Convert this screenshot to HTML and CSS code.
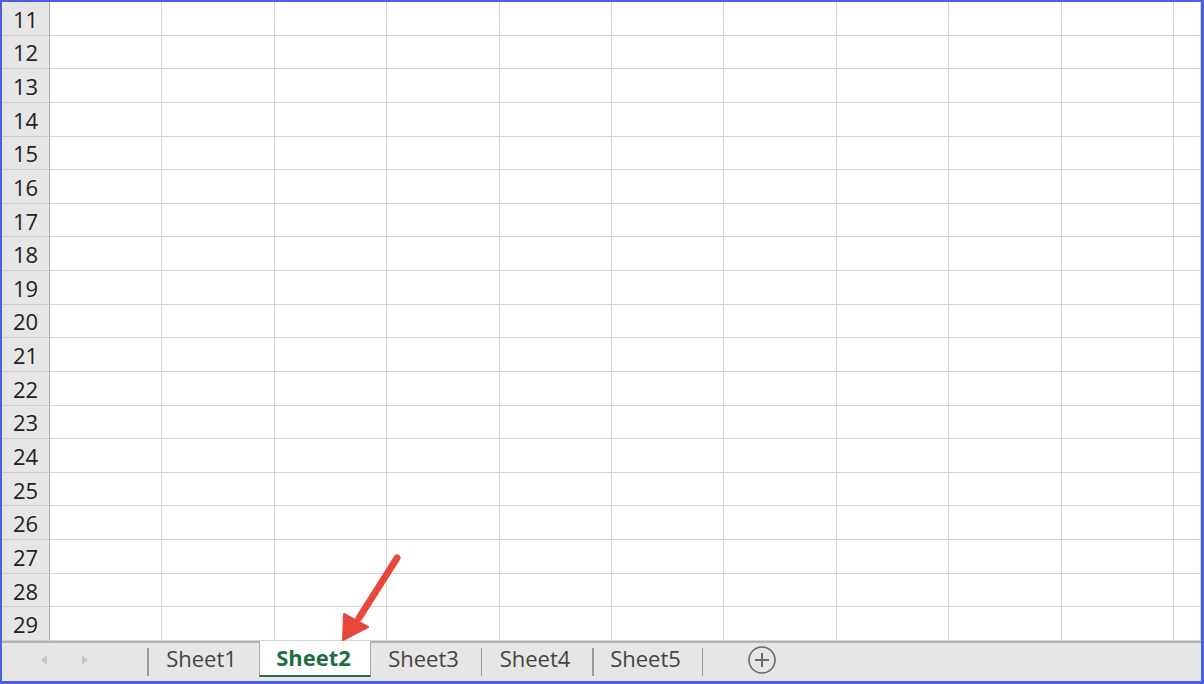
FILE: index.html
```html
<!DOCTYPE html>
<html>
<head>
<meta charset="utf-8">
<link rel="stylesheet" href="styles.css">
</head>
<body>
<div class="frame">
  <div class="sheet">
    <div class="row"><div class="rh">11</div><div class="c"></div><div class="c"></div><div class="c"></div><div class="c"></div><div class="c"></div><div class="c"></div><div class="c"></div><div class="c"></div><div class="c"></div><div class="c"></div><div class="c"></div></div>
    <div class="row"><div class="rh">12</div><div class="c"></div><div class="c"></div><div class="c"></div><div class="c"></div><div class="c"></div><div class="c"></div><div class="c"></div><div class="c"></div><div class="c"></div><div class="c"></div><div class="c"></div></div>
    <div class="row"><div class="rh">13</div><div class="c"></div><div class="c"></div><div class="c"></div><div class="c"></div><div class="c"></div><div class="c"></div><div class="c"></div><div class="c"></div><div class="c"></div><div class="c"></div><div class="c"></div></div>
    <div class="row"><div class="rh">14</div><div class="c"></div><div class="c"></div><div class="c"></div><div class="c"></div><div class="c"></div><div class="c"></div><div class="c"></div><div class="c"></div><div class="c"></div><div class="c"></div><div class="c"></div></div>
    <div class="row"><div class="rh">15</div><div class="c"></div><div class="c"></div><div class="c"></div><div class="c"></div><div class="c"></div><div class="c"></div><div class="c"></div><div class="c"></div><div class="c"></div><div class="c"></div><div class="c"></div></div>
    <div class="row"><div class="rh">16</div><div class="c"></div><div class="c"></div><div class="c"></div><div class="c"></div><div class="c"></div><div class="c"></div><div class="c"></div><div class="c"></div><div class="c"></div><div class="c"></div><div class="c"></div></div>
    <div class="row"><div class="rh">17</div><div class="c"></div><div class="c"></div><div class="c"></div><div class="c"></div><div class="c"></div><div class="c"></div><div class="c"></div><div class="c"></div><div class="c"></div><div class="c"></div><div class="c"></div></div>
    <div class="row"><div class="rh">18</div><div class="c"></div><div class="c"></div><div class="c"></div><div class="c"></div><div class="c"></div><div class="c"></div><div class="c"></div><div class="c"></div><div class="c"></div><div class="c"></div><div class="c"></div></div>
    <div class="row"><div class="rh">19</div><div class="c"></div><div class="c"></div><div class="c"></div><div class="c"></div><div class="c"></div><div class="c"></div><div class="c"></div><div class="c"></div><div class="c"></div><div class="c"></div><div class="c"></div></div>
    <div class="row"><div class="rh">20</div><div class="c"></div><div class="c"></div><div class="c"></div><div class="c"></div><div class="c"></div><div class="c"></div><div class="c"></div><div class="c"></div><div class="c"></div><div class="c"></div><div class="c"></div></div>
    <div class="row"><div class="rh">21</div><div class="c"></div><div class="c"></div><div class="c"></div><div class="c"></div><div class="c"></div><div class="c"></div><div class="c"></div><div class="c"></div><div class="c"></div><div class="c"></div><div class="c"></div></div>
    <div class="row"><div class="rh">22</div><div class="c"></div><div class="c"></div><div class="c"></div><div class="c"></div><div class="c"></div><div class="c"></div><div class="c"></div><div class="c"></div><div class="c"></div><div class="c"></div><div class="c"></div></div>
    <div class="row"><div class="rh">23</div><div class="c"></div><div class="c"></div><div class="c"></div><div class="c"></div><div class="c"></div><div class="c"></div><div class="c"></div><div class="c"></div><div class="c"></div><div class="c"></div><div class="c"></div></div>
    <div class="row"><div class="rh">24</div><div class="c"></div><div class="c"></div><div class="c"></div><div class="c"></div><div class="c"></div><div class="c"></div><div class="c"></div><div class="c"></div><div class="c"></div><div class="c"></div><div class="c"></div></div>
    <div class="row"><div class="rh">25</div><div class="c"></div><div class="c"></div><div class="c"></div><div class="c"></div><div class="c"></div><div class="c"></div><div class="c"></div><div class="c"></div><div class="c"></div><div class="c"></div><div class="c"></div></div>
    <div class="row"><div class="rh">26</div><div class="c"></div><div class="c"></div><div class="c"></div><div class="c"></div><div class="c"></div><div class="c"></div><div class="c"></div><div class="c"></div><div class="c"></div><div class="c"></div><div class="c"></div></div>
    <div class="row"><div class="rh">27</div><div class="c"></div><div class="c"></div><div class="c"></div><div class="c"></div><div class="c"></div><div class="c"></div><div class="c"></div><div class="c"></div><div class="c"></div><div class="c"></div><div class="c"></div></div>
    <div class="row"><div class="rh">28</div><div class="c"></div><div class="c"></div><div class="c"></div><div class="c"></div><div class="c"></div><div class="c"></div><div class="c"></div><div class="c"></div><div class="c"></div><div class="c"></div><div class="c"></div></div>
    <div class="row"><div class="rh">29</div><div class="c"></div><div class="c"></div><div class="c"></div><div class="c"></div><div class="c"></div><div class="c"></div><div class="c"></div><div class="c"></div><div class="c"></div><div class="c"></div><div class="c"></div></div>
  </div>
  <div class="tabbar">
    <div class="nav">
      <svg class="navicon" width="8" height="12" viewBox="0 0 8 12"><path d="M7 1 L1 6 L7 11 Z" fill="#c6c6c6"/></svg>
      <svg class="navicon" width="8" height="12" viewBox="0 0 8 12"><path d="M1 1 L7 6 L1 11 Z" fill="#c6c6c6"/></svg>
    </div>
    <span class="sep"></span>
    <div class="tab">Sheet1</div>
    <div class="tab active">Sheet2</div>
    <div class="tab">Sheet3</div>
    <span class="sep"></span>
    <div class="tab">Sheet4</div>
    <span class="sep"></span>
    <div class="tab narrow">Sheet5</div>
    <span class="sep"></span>
    <div class="add">
      <svg width="30" height="30" viewBox="0 0 30 30"><circle cx="15" cy="15" r="13" fill="none" stroke="#6a6a6a" stroke-width="1.6"/><path d="M15 8 V22 M8 15 H22" stroke="#6a6a6a" stroke-width="2"/></svg>
    </div>
  </div>
  <svg class="callout" width="80" height="100" viewBox="0 0 80 100">
    <line x1="67" y1="10" x2="29" y2="70" stroke="#e8473d" stroke-width="7" stroke-linecap="round"/>
    <path d="M13 92 L14 66 L38 79 Z" fill="#e8473d" stroke="#e8473d" stroke-width="2" stroke-linejoin="round"/>
  </svg>
</div>
</body>
</html>
```
FILE: styles.css
```css
html, body {
  margin: 0;
  padding: 0;
}
body {
  width: 1204px;
  height: 684px;
  overflow: hidden;
  font-family: "Open Sans", "Noto Sans", sans-serif;
}
.frame {
  position: relative;
  box-sizing: border-box;
  width: 1204px;
  height: 684px;
  border-style: solid;
  border-color: #4a5ee6;
  border-width: 2px 3px 3px 2px;
  display: flex;
  flex-direction: column;
  background: #fff;
}
.sheet {
  height: 639px;
  flex-shrink: 0;
  display: grid;
  grid-template-rows: repeat(19, 1fr);
  overflow: hidden;
}
.row {
  display: grid;
  grid-template-columns: 48px repeat(10, 112.4px) 1fr;
}
.rh {
  background: #e6e6e6;
  border-right: 1px solid #ababab;
  border-bottom: 1px solid #cccccc;
  color: #222;
  font-size: 22px;
  display: flex;
  align-items: center;
  justify-content: center;
  line-height: 1;
  padding-top: 1px;
}
.c {
  border-right: 1px solid #d4d4d4;
  border-bottom: 1px solid #d4d4d4;
}
.tabbar {
  flex: 1;
  min-height: 0;
  display: flex;
  align-items: stretch;
  background: #e6e6e6;
  border-top: 2px solid #b3b3b3;
}
.nav {
  width: 145px;
  display: flex;
  align-items: center;
  justify-content: center;
  gap: 33px;
  padding-right: 20px;
  box-sizing: border-box;
  padding-bottom: 5px;
}
.sep {
  width: 1.5px;
  background: #9a9a9a;
  margin: 5px 0 5px;
}
.tab {
  width: 110px;
  display: flex;
  align-items: center;
  justify-content: center;
  font-size: 22px;
  line-height: 1;
  color: #444;
  padding-bottom: 8px;
  box-sizing: border-box;
  padding-right: 4px;
}
.tab.narrow {
  width: 108px;
}
.tab.active {
  width: 112px;
  margin-top: -2px;
  margin-bottom: 4px;
  background: #fff;
  border-left: 1px solid #a8a8a8;
  border-right: 1px solid #a8a8a8;
  border-bottom: 2px solid #217346;
  color: #1f6e42;
  font-weight: 700;
  padding-bottom: 2px;
  padding-right: 2px;
}
.add {
  width: 120px;
  display: flex;
  align-items: center;
  justify-content: center;
  padding-bottom: 4px;
  padding-right: 2px;
  box-sizing: border-box;
}
.callout {
  position: absolute;
  left: 328px;
  top: 546px;
}
```
